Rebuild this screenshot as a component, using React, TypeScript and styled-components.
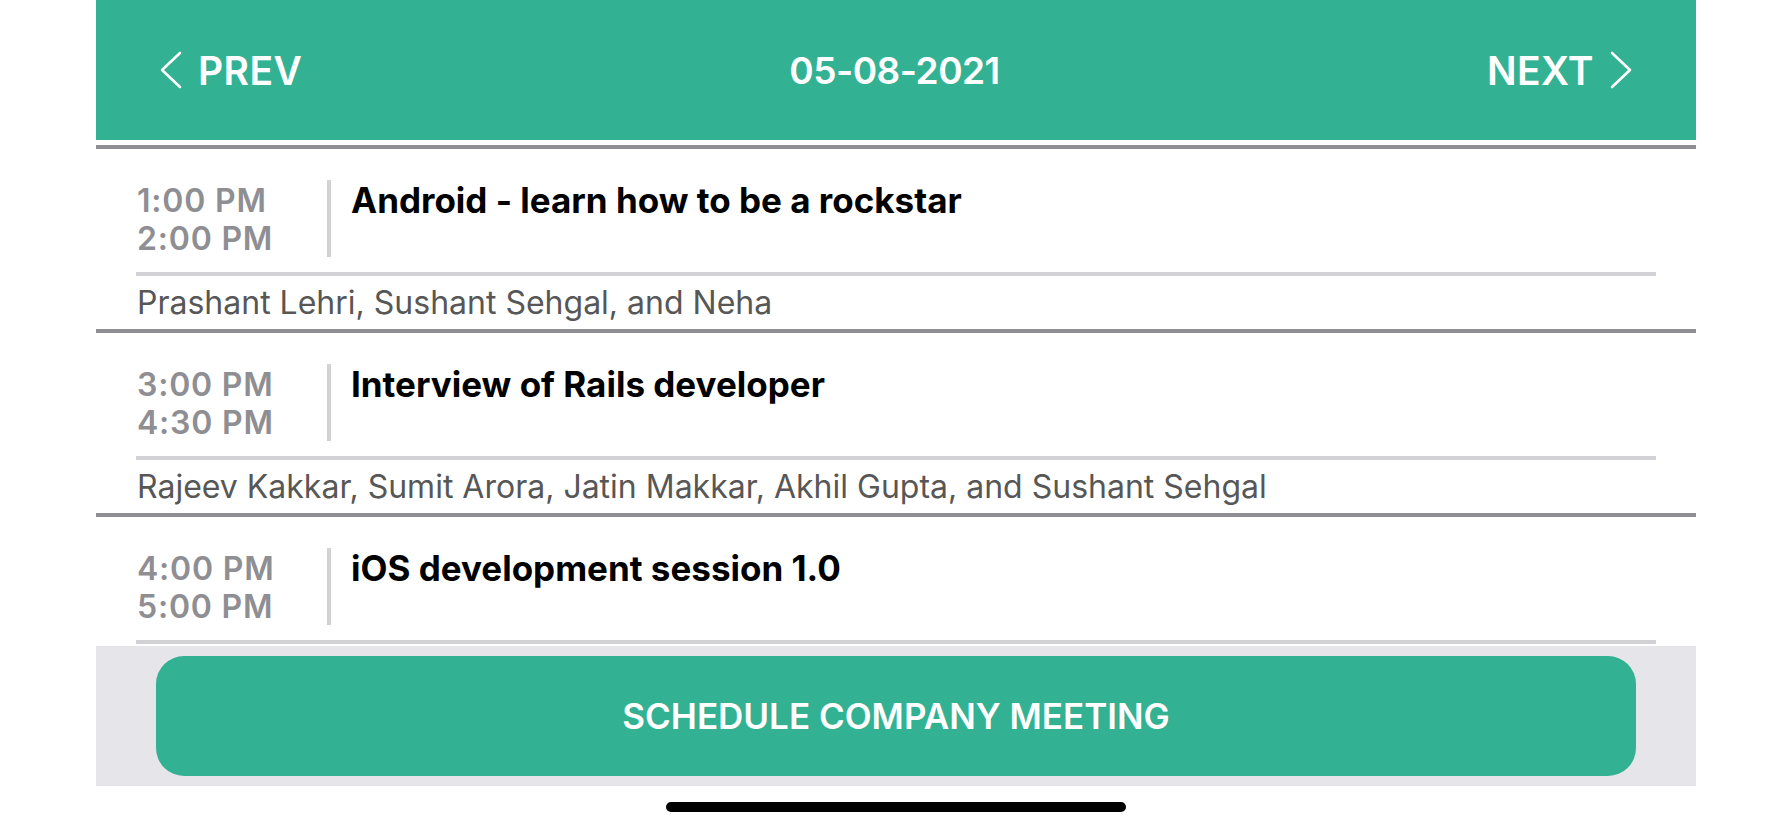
import { createGlobalStyle, styled } from 'styled-components';

const GlobalStyle = createGlobalStyle`
    html, body {
        margin: 0;
        padding: 0;
        background: #ffffff;
    }
    body {
        font-family: Inter, 'Noto Sans', sans-serif;
        -webkit-font-smoothing: antialiased;
    }
    * {
        box-sizing: border-box;
    }
`;

const GREEN = '#33b293';

const Page = styled.div`
    width: 1792px;
    height: 828px;
    display: flex;
    flex-direction: column;
    align-items: center;
    overflow: hidden;
`;

const Screen = styled.div`
    width: 1600px;
    display: flex;
    flex-direction: column;
`;

const Header = styled.header`
    height: 140px;
    background: ${GREEN};
    color: #ffffff;
    display: flex;
    align-items: center;
    justify-content: space-between;
    padding: 0 64px;
    font-weight: 600;
`;

const NavButton = styled.button`
    display: flex;
    align-items: center;
    gap: 16px;
    background: none;
    border: none;
    padding: 0;
    color: inherit;
    font: inherit;
    font-size: 39px;
    letter-spacing: 0.4px;
    cursor: pointer;
`;

const DateTitle = styled.div`
    font-size: 37px;
    letter-spacing: -0.5px;
`;

const List = styled.div`
    height: 506px;
    padding-top: 5px;
    overflow: hidden;
`;

const Item = styled.div`
    border-top: 4px solid #8e8e93;
    padding-top: 31px;
`;

const MainRow = styled.div`
    display: flex;
    align-items: stretch;
    padding: 0 40px 0 41px;
`;

const TimeCol = styled.div`
    width: 190px;
    padding-top: 2px;
    font-size: 32px;
    font-weight: 600;
    line-height: 37.5px;
    letter-spacing: 0.8px;
    color: #8e8e93;
`;

const Divider = styled.div`
    width: 4px;
    background: #d1d1d6;
`;

const Title = styled.div`
    margin-left: 20px;
    font-size: 35px;
    font-weight: 700;
    line-height: 40px;
    color: #000000;
`;

const Separator = styled.div`
    height: 4px;
    margin: 15px 40px 0;
    background: #d1d1d6;
`;

const Names = styled.div`
    padding: 8px 41px 7px;
    font-size: 32px;
    line-height: 38px;
    color: #575757;
    white-space: nowrap;
`;

const Footer = styled.div`
    height: 140px;
    padding: 10px 60px;
    background: #e5e5ea;
`;

const ScheduleButton = styled.button`
    width: 100%;
    height: 120px;
    border: none;
    border-radius: 28px;
    background: ${GREEN};
    color: #ffffff;
    font-family: inherit;
    font-size: 35px;
    font-weight: 600;
    cursor: pointer;
`;

const HomeBar = styled.div`
    width: 460px;
    height: 10px;
    margin-top: 16px;
    border-radius: 5px;
    background: #000000;
`;

const Chevron = ({ dir }: { dir: 'left' | 'right' }) => (
    <svg width="22" height="38" viewBox="0 0 22 38" fill="none">
        <polyline
            points={dir === 'left' ? '20,2 2,19 20,36' : '2,2 20,19 2,36'}
            stroke="#ffffff"
            strokeWidth="2.6"
            strokeLinecap="round"
            strokeLinejoin="round"
        />
    </svg>
);

type Meeting = {
    start: string;
    end: string;
    title: string;
    attendees?: string;
};

const meetings: Meeting[] = [
    {
        start: '1:00 PM',
        end: '2:00 PM',
        title: 'Android - learn how to be a rockstar',
        attendees: 'Prashant Lehri, Sushant Sehgal, and Neha',
    },
    {
        start: '3:00 PM',
        end: '4:30 PM',
        title: 'Interview of Rails developer',
        attendees:
            'Rajeev Kakkar, Sumit Arora, Jatin Makkar, Akhil Gupta, and Sushant Sehgal',
    },
    {
        start: '4:00 PM',
        end: '5:00 PM',
        title: 'iOS development session 1.0',
    },
];

const App = () => {
    return (
        <>
            <GlobalStyle />
            <Page>
                <Screen>
                    <Header>
                        <NavButton>
                            <Chevron dir="left" />
                            PREV
                        </NavButton>
                        <DateTitle>05-08-2021</DateTitle>
                        <NavButton>
                            NEXT
                            <Chevron dir="right" />
                        </NavButton>
                    </Header>
                    <List>
                        {meetings.map((m) => (
                            <Item key={m.title}>
                                <MainRow>
                                    <TimeCol>
                                        <div>{m.start}</div>
                                        <div>{m.end}</div>
                                    </TimeCol>
                                    <Divider />
                                    <Title>{m.title}</Title>
                                </MainRow>
                                <Separator />
                                {m.attendees && <Names>{m.attendees}</Names>}
                            </Item>
                        ))}
                    </List>
                    <Footer>
                        <ScheduleButton>SCHEDULE COMPANY MEETING</ScheduleButton>
                    </Footer>
                </Screen>
                <HomeBar />
            </Page>
        </>
    );
};

export default App;
